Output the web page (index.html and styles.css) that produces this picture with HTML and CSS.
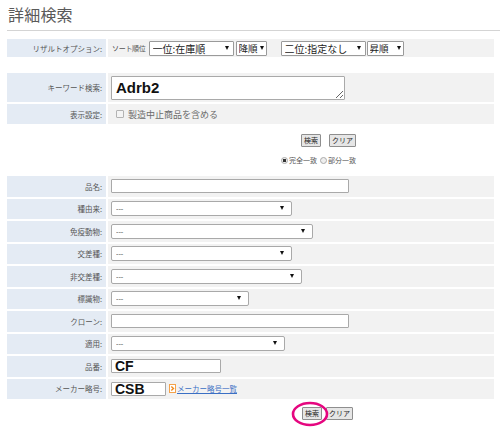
FILE: index.html
```html
<!DOCTYPE html>
<html lang="ja">
<head>
<meta charset="utf-8">
<title>詳細検索</title>
<link rel="stylesheet" href="styles.css">
</head>
<body>
<h1 class="title">詳細検索</h1>

<table class="form opts">
  <tr>
    <th>リザルトオプション:</th>
    <td>
      <div class="line">
        <span class="small">ソート順位</span>
        <span class="sel big s85"><select><option>一位:在庫順</option></select></span>
        <span class="sel big s30 gap2"><select><option>降順</option></select></span>
        <span class="sel big s85 gap14"><select><option>二位:指定なし</option></select></span>
        <span class="sel big s37 gap1"><select><option>昇順</option></select></span>
      </div>
    </td>
  </tr>
</table>

<table class="form kw">
  <tr class="rkw">
    <th>キーワード検索:</th>
    <td><textarea class="kwbox">Adrb2</textarea></td>
  </tr>
  <tr class="rdisp">
    <th>表示設定:</th>
    <td><label class="chk"><input type="checkbox"><span>製造中止商品を含める</span></label></td>
  </tr>
</table>

<div class="btns top">
  <button class="btn">検索</button>
  <button class="btn">クリア</button>
</div>
<div class="radios">
  <label class="rad"><input type="radio" name="m" checked><span>完全一致</span></label>
  <label class="rad"><input type="radio" name="m"><span>部分一致</span></label>
</div>

<table class="form detail">
  <tr><th>品名:</th><td><input class="txt w238" type="text"></td></tr>
  <tr><th>種由来:</th><td><span class="sel s181"><select><option>---</option></select></span></td></tr>
  <tr><th>免疫動物:</th><td><span class="sel s202"><select><option>---</option></select></span></td></tr>
  <tr><th>交差種:</th><td><span class="sel s181"><select><option>---</option></select></span></td></tr>
  <tr><th>非交差種:</th><td><span class="sel s191"><select><option>---</option></select></span></td></tr>
  <tr><th>標識物:</th><td><span class="sel s138"><select><option>---</option></select></span></td></tr>
  <tr><th>クローン:</th><td><input class="txt w238" type="text"></td></tr>
  <tr><th>適用:</th><td><span class="sel s174"><select><option>---</option></select></span></td></tr>
  <tr><th>品番:</th><td><input class="txt bold w110" type="text" value="CF"></td></tr>
  <tr><th>メーカー略号:</th><td>
    <div class="line">
      <input class="txt bold w55" type="text" value="CSB">
      <a class="maker" href="#"><svg class="ico" width="7" height="9" viewBox="0 0 7 9"><rect x="0.5" y="0.5" width="6" height="8" fill="#fff" stroke="#f5a24a"/><path d="M2.3 2.4 L4.5 4.5 L2.3 6.6" fill="none" stroke="#f08a1c" stroke-width="1.4"/></svg><span>メーカー略号一覧</span></a>
    </div>
  </td></tr>
</table>

<div class="btns bottom">
  <span class="mark">
    <button class="btn">検索</button>
    <svg class="ring" width="38" height="26" viewBox="0 0 38 26"><ellipse cx="19" cy="13" rx="17" ry="11" fill="none" stroke="#e5067f" stroke-width="2.6"/></svg>
  </span>
  <button class="btn">クリア</button>
</div>
</body>
</html>
```

FILE: styles.css
```css
* { box-sizing: border-box; }
html, body { margin: 0; padding: 0; background: #fff; }
body {
  width: 500px;
  height: 431px;
  overflow: hidden;
  font-family: "Noto Sans CJK JP", "Noto Sans", sans-serif;
  color: #555;
}
.title {
  margin: 0 0 0 7px;
  padding: 3px 0 0 1px;
  height: 31px;
  font-size: 16px;
  line-height: 22px;
  font-weight: normal;
  color: #5a5a5a;
  letter-spacing: 0.2px;
  border-bottom: 1px solid #d4d4d4;
}
.form {
  border-collapse: separate;
  border-spacing: 2px;
  margin-left: 5px;
  width: 491px;
  table-layout: fixed;
}
.form th {
  width: 99px;
  background: #e4ebf4;
  font-weight: normal;
  font-size: 7.5px;
  color: #555;
  text-align: right;
  padding: 0 4px 0 0;
  white-space: nowrap;
}
.form td {
  background: #f2f2f2;
  padding: 0 0 0 3px;
  font-size: 7px;
}
.opts { margin-top: 6px; }
.opts tr { height: 18px; }
.kw { margin-top: 12px; }
.rkw { height: 29px; }
.rdisp { height: 20px; }
.detail { margin-top: 9px; }
.detail tr { height: 20.5px; }

.line { display: flex; align-items: center; }
.small { font-size: 7px; color: #555; margin-right: 3px; letter-spacing: -0.3px; margin-left: 1px; }

.sel {
  position: relative;
  display: inline-block;
  height: 15px;
  vertical-align: middle;
}
.sel select {
  appearance: none;
  -webkit-appearance: none;
  width: 100%;
  height: 100%;
  margin: 0;
  border: 1px solid #a9a9a9;
  border-radius: 2px;
  background: #fff;
  font-family: "Noto Sans CJK JP", sans-serif;
  font-size: 7px;
  color: #333;
  padding: 0 0 0 4px;
  line-height: 13px;
  display: block;
}
.sel::after {
  content: "";
  position: absolute;
  right: 8px;
  top: 5px;
  border-left: 2.5px solid transparent;
  border-right: 2.5px solid transparent;
  border-top: 4px solid #111;
  pointer-events: none;
}
.sel.big { height: 15px; }
.sel.big select { font-size: 10px; color: #222; padding-left: 3px; border-radius: 1px; border-color: #9a9a9a; }
.sel.big::after { right: 5px; }
.sel.big.s30 select, .sel.big.s37 select { font-size: 9.5px; padding-left: 2px; }
.sel.big.s30::after, .sel.big.s37::after { right: 3px; }
.gap2 { margin-left: 2px; }
.gap14 { margin-left: 14px; }
.gap1 { margin-left: 1px; }
.s85 { width: 85px; }
.s30 { width: 31px; }
.s37 { width: 37px; }
.s181 { width: 181px; }
.s202 { width: 202px; }
.s191 { width: 191px; }
.s138 { width: 138px; }
.s174 { width: 174px; }

.kwbox {
  display: block;
  width: 234px;
  height: 24px;
  margin: 0;
  border: 1px solid #a9a9a9;
  border-radius: 1px;
  padding: 2px 4px 0;
  font-family: "Liberation Sans", Arial, sans-serif;
  font-weight: bold;
  font-size: 15px;
  line-height: 18px;
  color: #111;
  background: #fff;
  resize: both;
  overflow: hidden;
}

.chk { display: flex; align-items: center; }
.chk input {
  appearance: none;
  -webkit-appearance: none;
  width: 8px;
  height: 8px;
  margin: 0 4px 0 5px;
  border: 1px solid #b3b3b3;
  background: #f4f4f4;
  border-radius: 1px;
}
.chk span { font-size: 9px; color: #6a6a6a; }

.btns { display: flex; align-items: center; }
.btns.top { margin-top: 8px; padding-left: 301px; gap: 8px; }
.btn {
  margin: 0;
  height: 13px;
  padding: 0 2px;
  font-family: "Noto Sans CJK JP", sans-serif;
  font-size: 7px;
  line-height: 11px;
  color: #222;
  background: #e6e6e6;
  border: 1px solid #8e8e8e;
  border-radius: 1px;
}
.radios {
  display: flex;
  align-items: center;
  margin-top: 8px;
  padding-left: 281px;
  gap: 3px;
}
.rad { display: flex; align-items: center; }
.rad input {
  appearance: none;
  -webkit-appearance: none;
  width: 7px;
  height: 7px;
  margin: 0 1px 0 0;
  border: 1px solid #aaa;
  border-radius: 50%;
  background: #eee;
}
.rad input:checked { background: radial-gradient(circle, #333 0 1.5px, #eee 2px); }
.rad span { font-size: 7px; color: #555; }

.txt {
  margin: 0;
  height: 14px;
  border: 1px solid #a9a9a9;
  border-radius: 1px;
  background: #fff;
  padding: 0 3px;
  display: block;
}
.txt.bold {
  font-family: "Liberation Sans", Arial, sans-serif;
  font-weight: bold;
  font-size: 14px;
  line-height: 12px;
  color: #111;
  height: 14px;
}
.w238 { width: 238px; }
.w110 { width: 110px; }
.w55 { width: 55px; }

.maker {
  display: flex;
  align-items: center;
  margin-left: 3px;
  color: #3a6fc4;
  font-size: 7.5px;
  text-decoration: underline;
}
.maker .ico { display: block; margin-right: 1px; }

.btns.bottom { margin-top: 6px; padding-left: 302px; gap: 4px; }
.mark { position: relative; display: flex; }
.ring { position: absolute; left: -11px; top: -6px; pointer-events: none; }
```
